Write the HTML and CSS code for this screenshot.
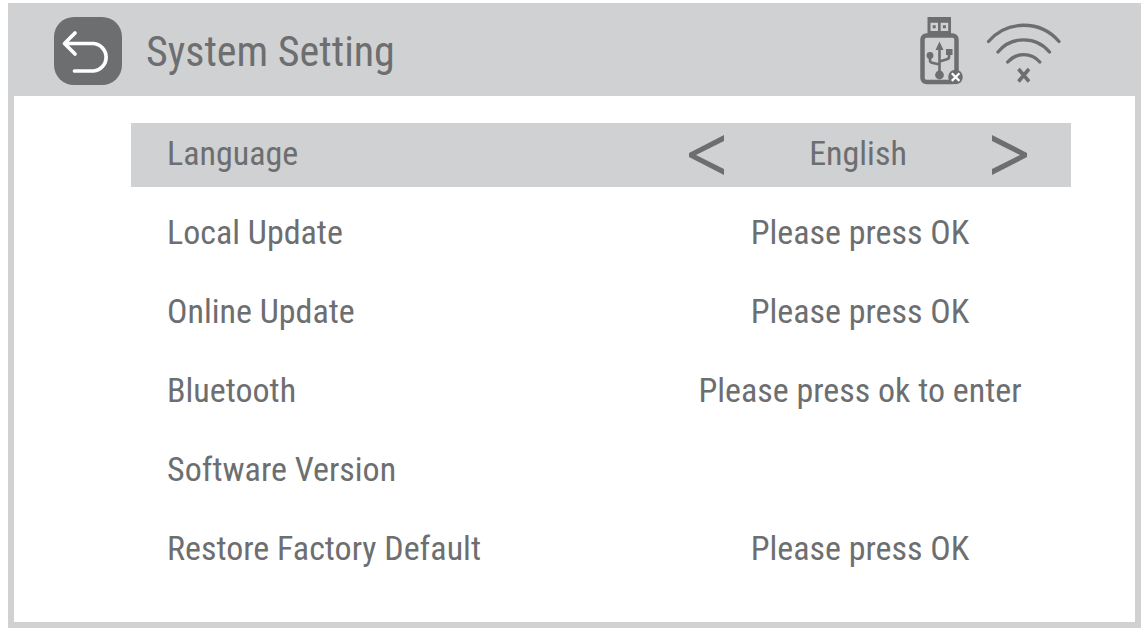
FILE: index.html
```html
<!DOCTYPE html>
<html lang="en">
<head>
    <meta charset="UTF-8">
    <meta name="viewport" content="width=device-width, initial-scale=1.0">
    <title>System Setting</title>
    <link rel="stylesheet" href="styles.css">
</head>
<body>
    <div class="screen">
        <header class="top-bar">
            <button class="back-btn" type="button" aria-label="Back">
                <svg width="68" height="68" viewBox="0 0 68 68" fill="none" stroke="#fff" stroke-width="3.700" stroke-linecap="round" stroke-linejoin="round">
                    <path d="M21 16 L10.500 26.500 L21 37 M10.500 26.500 H39.500 A13.800 13.800 0 0 1 39.500 54 H20.500"/>
                </svg>
            </button>
            <h1>System Setting</h1>

            <div class="status-icons">
                <!-- USB drive, not connected -->
                <svg width="44" height="68" viewBox="0 0 44 68" role="img" aria-label="USB not connected">
                    <path fill="#6d6e70" fill-rule="evenodd" d="M7.500 0 H31 V17 H7.500 Z M10.500 5.700 V14 H18 V5.700 Z M20.700 5.700 V14 H28.200 V5.700 Z"/>
                    <path fill="#6d6e70" d="M12.700 8.300 h3 v3 h-3 z M22.900 8.300 h3 v3 h-3 z"/>
                    <rect x="2.500" y="18.500" width="34" height="46.500" rx="4" fill="none" stroke="#6d6e70" stroke-width="4.500"/>
                    <path fill="none" stroke="#6d6e70" stroke-width="2.600" d="M19.500 58 V30 M10 38 V43.500 Q10 45.300 12 45.800 L19.500 47.500 M29 35 V40 Q29 41.600 27 42.200 L19.500 44.500"/>
                    <path fill="#6d6e70" d="M19.500 24.500 L23.500 33 H15.500 Z M26 32 h6.500 v6 h-6.500 z"/>
                    <circle cx="10" cy="38.500" r="3.400" fill="#6d6e70"/>
                    <circle cx="19.500" cy="58" r="4.400" fill="#6d6e70"/>
                    <circle cx="35.500" cy="60" r="7.300" fill="#6d6e70"/>
                    <path fill="none" stroke="#fff" stroke-width="2.200" d="M31.800 56.300 L39.400 63.900 M39.400 56.300 L31.800 63.900"/>
                </svg>
                <!-- Wi-Fi, not connected -->
                <svg width="76" height="64" viewBox="0 0 76 64" fill="none" stroke="#6d6e70" stroke-width="3.300" stroke-linecap="round" role="img" aria-label="Wi-Fi not connected">
                    <path d="M2.500 22.500 A46.400 46.400 0 0 1 73 22.500 M12 33 A33.300 33.300 0 0 1 63.500 33 M21.700 43 A21.300 21.300 0 0 1 53.800 43"/>
                    <path stroke-width="3.500" stroke-linecap="butt" d="M32.500 50 L43 62.500 M43 50 L32.500 62.500"/>
                </svg>
            </div>
        </header>

        <main>
            <ul class="settings">
                <li class="row selected">
                    <span class="label" id="language-label">Language</span>
                    <div class="picker" role="group" aria-labelledby="language-label">
                        <button class="arrow-btn" type="button" aria-label="Previous language">
                            <svg width="36" height="40" viewBox="0 0 36 40" fill="#6d6e70">
                                <path d="M35 0 V6 L7 20 L35 34 V40 L0 22 V18 Z"/>
                            </svg>
                        </button>
                        <output class="value">English</output>
                        <button class="arrow-btn" type="button" aria-label="Next language">
                            <svg width="36" height="40" viewBox="0 0 36 40" fill="#6d6e70">
                                <path d="M1 0 V6 L29 20 L1 34 V40 L36 22 V18 Z"/>
                            </svg>
                        </button>
                    </div>
                </li>
                <li class="row">
                    <span class="label" id="local-label">Local Update</span>
                    <button class="value" type="button" aria-describedby="local-label">Please press OK</button>
                </li>
                <li class="row">
                    <span class="label" id="online-label">Online Update</span>
                    <button class="value" type="button" aria-describedby="online-label">Please press OK</button>
                </li>
                <li class="row">
                    <span class="label" id="bluetooth-label">Bluetooth</span>
                    <button class="value" type="button" aria-describedby="bluetooth-label">Please press ok to enter</button>
                </li>
                <li class="row">
                    <span class="label">Software Version</span>
                </li>
                <li class="row">
                    <span class="label" id="restore-label">Restore Factory Default</span>
                    <button class="value" type="button" aria-describedby="restore-label">Please press OK</button>
                </li>
            </ul>
        </main>
    </div>
</body>
</html>
```
FILE: styles.css
```css
:root {
    --ink: #6d6e70;
    --bar: #d0d1d3;
}

* {
    margin: 0;
    padding: 0;
    box-sizing: border-box;
}

body {
    font-family: "Roboto Condensed", "Liberation Sans Narrow", "Liberation Sans", sans-serif;
    background: #fff;
    color: var(--ink);
    padding: 3px 3px 4px 8px;
}

button {
    border: none;
    background: none;
    color: inherit;
    font: inherit;
    cursor: pointer;
}

svg {
    display: block;
}

.screen {
    border: 6px solid var(--bar);
    border-top: none;
}

/* Header */
.top-bar {
    display: flex;
    align-items: center;
    gap: 24px;
    padding: 14px 73px 11px 40px;
    background: var(--bar);
}

.back-btn {
    border-radius: 20px;
    background: var(--ink);
}

h1 {
    padding-top: 2px;
    font-size: 42px;
    font-weight: 400;
    line-height: 52px;
}

.status-icons {
    display: flex;
    align-items: center;
    gap: 22px;
    margin-left: auto;
}

/* Settings list */
main {
    padding: 27px 64px 40px 117px;
}

.settings {
    display: flex;
    flex-direction: column;
    gap: 15px;
    list-style: none;
}

.row {
    display: flex;
    align-items: center;
    justify-content: space-between;
    min-height: 64px;
    padding: 0 36px;
    font-size: 34px;
    line-height: 44px;
}

.selected {
    background: var(--bar);
}

.label,
.value {
    padding-bottom: 4px;
}

.row > .value,
.picker {
    width: 350px;
}

.value {
    text-align: center;
    white-space: nowrap;
}

.picker {
    display: flex;
    align-items: center;
    justify-content: space-between;
    padding: 0 8px 0 4px;
}
```
